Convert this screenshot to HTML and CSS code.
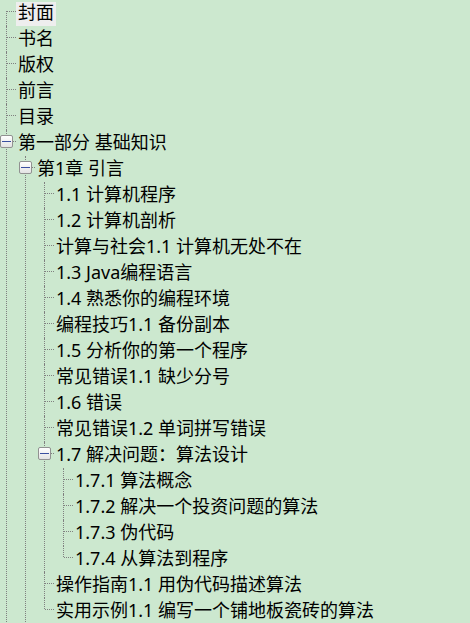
FILE: index.html
```html
<!DOCTYPE html>
<html lang="zh-CN">
<head>
    <meta charset="UTF-8">
    <meta name="viewport" content="width=device-width, initial-scale=1.0">
    <link rel="stylesheet" href="styles.css">
</head>
<body>
    <div class="tree">
        <ul class="root">
            <li class="top"><div class="row"><span class="label selected">封面</span></div></li>
            <li><div class="row"><span class="label">书名</span></div></li>
            <li><div class="row"><span class="label">版权</span></div></li>
            <li><div class="row"><span class="label">前言</span></div></li>
            <li><div class="row"><span class="label">目录</span></div></li>
            <li>
                <div class="row"><span class="toggle"></span><span class="label">第一部分 基础知识</span></div>
                <ul>
                    <li>
                        <div class="row"><span class="toggle"></span><span class="label">第1章 引言</span></div>
                        <ul>
                            <li><div class="row"><span class="label">1.1 计算机程序</span></div></li>
                            <li><div class="row"><span class="label">1.2 计算机剖析</span></div></li>
                            <li><div class="row"><span class="label">计算与社会1.1 计算机无处不在</span></div></li>
                            <li><div class="row"><span class="label">1.3 Java编程语言</span></div></li>
                            <li><div class="row"><span class="label">1.4 熟悉你的编程环境</span></div></li>
                            <li><div class="row"><span class="label">编程技巧1.1 备份副本</span></div></li>
                            <li><div class="row"><span class="label">1.5 分析你的第一个程序</span></div></li>
                            <li><div class="row"><span class="label">常见错误1.1 缺少分号</span></div></li>
                            <li><div class="row"><span class="label">1.6 错误</span></div></li>
                            <li><div class="row"><span class="label">常见错误1.2 单词拼写错误</span></div></li>
                            <li>
                                <div class="row"><span class="toggle"></span><span class="label">1.7 解决问题：算法设计</span></div>
                                <ul>
                                    <li><div class="row"><span class="label">1.7.1 算法概念</span></div></li>
                                    <li><div class="row"><span class="label">1.7.2 解决一个投资问题的算法</span></div></li>
                                    <li><div class="row"><span class="label">1.7.3 伪代码</span></div></li>
                                    <li class="last"><div class="row"><span class="label">1.7.4 从算法到程序</span></div></li>
                                </ul>
                            </li>
                            <li><div class="row"><span class="label">操作指南1.1 用伪代码描述算法</span></div></li>
                            <li class="last"><div class="row"><span class="label">实用示例1.1 编写一个铺地板瓷砖的算法</span></div></li>
                        </ul>
                    </li>
                </ul>
            </li>
        </ul>
    </div>
</body>
</html>
```

FILE: styles.css
```css
html, body {
    margin: 0;
    padding: 0;
    height: 100%;
    overflow: hidden;
}

body {
    background-color: #cce8cf;
    font-family: "Noto Sans", "Noto Sans CJK SC", sans-serif;
    font-size: 18px;
    color: #000;
}

.tree ul {
    list-style: none;
    margin: 0;
    padding: 0 0 0 19px;
}
.tree ul.root {
    padding-left: 0;
}

.tree li {
    position: relative;
}

/* vertical dotted line for siblings */
.tree li::before {
    content: "";
    position: absolute;
    left: 6px;
    top: 0;
    bottom: 0;
    border-left: 1px dotted #808080;
}
.tree li.top::before {
    top: 11px;
}
.tree li.last::before {
    bottom: auto;
    height: 11px;
}

.row {
    position: relative;
    height: 26px;
}

/* horizontal connector */
.row::before {
    content: "";
    position: absolute;
    left: 7px;
    top: 11px;
    width: 9px;
    border-top: 1px dotted #808080;
}

.label {
    display: inline-block;
    margin-left: 16px;
    padding: 0 2px;
    height: 24px;
    line-height: 20px;
    white-space: nowrap;
}
.label.selected {
    background-color: #eeeeee;
}

/* expand / collapse box */
.toggle {
    position: absolute;
    left: 0;
    top: 5px;
    width: 11px;
    height: 11px;
    border: 1px solid #919191;
    border-radius: 2px;
    background: linear-gradient(#ffffff, #e3e3e3);
    z-index: 1;
}
.toggle::after {
    content: "";
    position: absolute;
    left: 1px;
    top: 5px;
    width: 9px;
    height: 1px;
    background-color: #3a50a0;
}
```
